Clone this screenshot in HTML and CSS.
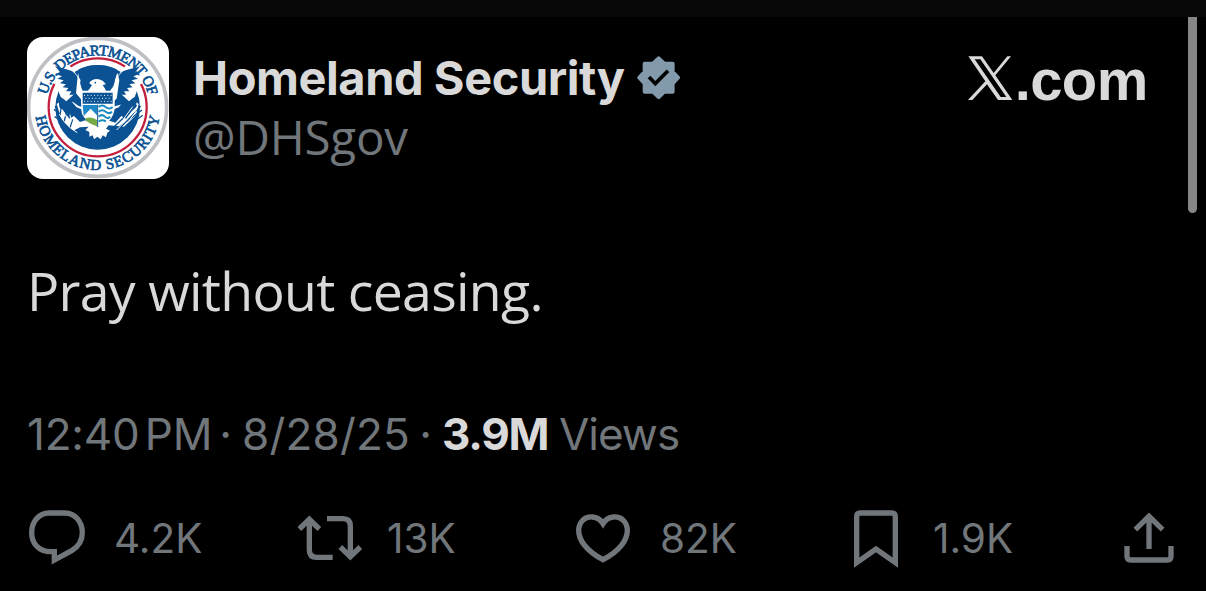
FILE: index.html
```
<!DOCTYPE html>
<html lang="en">
<head>
<meta charset="utf-8">
<title>Homeland Security on X</title>
<link rel="stylesheet" href="styles.css">
</head>
<body>
<div class="topbar"></div>
<main class="post">
  <header class="head">
    <svg class="avatar" viewBox="21 21 426 426">
      <defs>
        <path id="arcTop" d="M77 232a156 156 0 0 1 312 0"/>
        <path id="arcBottom" d="M45 232a188 188 0 0 0 376 0"/>
      </defs>
      <rect x="21" y="21" width="426" height="426" fill="#fff"/>
      <circle cx="233" cy="232" r="207" fill="none" stroke="#bfc0c4" stroke-width="11"/>
      <circle cx="233" cy="232" r="147" fill="none" stroke="#c41f3e" stroke-width="7"/>
      <circle cx="233" cy="232" r="127" fill="#0a5293"/>
      <path fill="#fff" d="M98 100L150 108L182 150L176 180L130 222L108 164L84 152ZM368 100L316 108L284 150L290 180L336 222L358 164L388 152Z"/>
      <path fill="#0a5293" d="M105 108C124 118 150 116 162 128C180 142 178 172 192 188L188 210L172 208L176 200L160 202L164 194L148 194L154 184L138 184L145 174L128 172L138 163L120 160L131 151L112 146L126 139L107 132L120 126Z"/>
      <path fill="#0a5293" d="M361 108C342 118 316 116 304 128C286 142 288 172 274 188L278 210L294 208L290 200L306 202L302 194L318 194L312 184L328 184L321 174L338 172L328 163L346 160L335 151L354 146L340 139L359 132L346 126Z"/>
      <path fill="#fff" d="M174 128C180 156 184 180 192 188L196 178L206 184L218 166L212 158C218 146 234 144 242 152L256 162L248 166L262 184L272 178C284 170 284 148 292 128L298 150L290 206L276 216L190 216L168 190Z"/>
      <path fill="#0a5293" d="M176 118Q233 92 290 118L282 158L270 184L258 184L252 168L262 160Q244 145 230 148Q212 148 208 161L216 168L206 184L194 182L184 158Z"/>
      <path fill="#fff" d="M208 160Q212 149 229 148Q249 148 258 164Q248 159 245 168L258 184H203L216 166Z"/>
      <circle cx="226" cy="158" r="2.5" fill="#0a5293"/>
      <path fill="#fff" d="M110 222L124 212L140 224L158 215L176 228L190 232L195 270L214 282L250 282L272 270L280 230L300 224L322 222L340 210L356 222L348 256L312 290L266 286L258 296L270 302L262 308L258 322L248 316L242 328L232 320L222 328L218 316L208 320L208 306L196 300L206 290L180 292L160 302L124 268Z"/>
      <path fill="#0a5293" d="M114 196L130 206L144 218L156 216L170 232L184 238L186 252L198 270L180 276L162 258L148 266L130 242L118 232ZM352 196L336 206L322 218L310 216L296 232L282 238L278 256L268 272L286 278L304 258L318 266L336 242L348 232Z"/>
      <path fill="none" stroke="#0a5293" stroke-width="4" d="M106 228Q124 288 182 318M102 238L119 252M124 228L120 256M104 260L128 276M140 246L132 276M120 290L146 294M158 268L149 296M362 228L278 318M366 240L276 307M368 256L286 318M350 226L272 300"/>
      <path fill="none" stroke="#fff" stroke-width="3" d="M126 238L138 260M150 254L153 276M310 268L338 230M326 274L350 242M172 276L184 286M118 252Q134 286 172 308M290 300L352 236"/>
      <path fill="#fff" d="M182 182H284V236Q278 276 234 296Q190 276 184 236Z"/>
      <path fill="#0a5293" d="M188 188H278V221H188Z"/>
      <path fill="none" stroke="#fff" stroke-width="3" stroke-dasharray="3 7" d="M192 196H276M196 205H274M192 214H276"/>
      <path fill="#1c88c8" d="M188 225H231V256L212 236L191 258Z"/>
      <path fill="#75a944" d="M194 266Q214 257 231 270V289Q204 280 194 266Z"/>
      <path fill="none" stroke="#168cc1" stroke-width="6" d="M236 231Q246 222 257 231T278 231M236 245Q246 236 257 245T276 245M236 260Q246 251 255 260T270 260M236 275Q244 267 258 274"/>
      <path fill="none" stroke="#0a5293" stroke-width="3" d="M233 224V291"/>
      <text class="seal-text"><textPath href="#arcTop" startOffset="37" textLength="418" lengthAdjust="spacing">U.S. DEPARTMENT OF</textPath></text>
      <text class="seal-text"><textPath href="#arcBottom" startOffset="28" textLength="534" lengthAdjust="spacing">HOMELAND SECURITY</textPath></text>
    </svg>
    <div class="who">
      <div class="name-row">
        <span class="name">Homeland Security</span>
        <svg class="badge" viewBox="622 49 130 130">
          <path fill="#829aab" stroke="#829aab" stroke-width="12" stroke-linejoin="round" d="M687 56L704 72H729V97L745 114L729 131V156H704L687 172L670 156H645V131L629 114L645 97V72H670Z"/>
          <path fill="none" stroke="#000" stroke-width="11" d="M658 112L677 132L715 93"/>
        </svg>
      </div>
      <div class="handle">@DHSgov</div>
    </div>
    <div class="brand">
      <svg class="brand-x" viewBox="56 167 134 134">
        <path fill="#d9d9d9" fill-rule="evenodd" d="M57 168H98L133 218L174 168H185L138 225L189 299H146L113 252L69 299H56L108 243ZM76 177L154 290H171L93 177Z"/>
      </svg>
      <span class="brand-com">.com</span>
    </div>
  </header>
  <p class="body-text">Pray without ceasing.</p>
  <div class="meta"><span class="time">12:40 PM</span><span class="dot">·</span><span class="date">8/28/25</span><span class="dot">·</span><b class="views">3.9M</b><span class="views-label">Views</span></div>
  <footer class="actions">
    <div class="action">
      <svg class="icon" viewBox="72 51 198 198"><path d="M147 69H195C225 69 247 96 247 128C247 156 233 171 215 182L163 210V185H152C116 185 95 160 95 128C95 96 116 69 147 69Z"/></svg>
      <span class="count">4.2K</span>
    </div>
    <div class="action">
      <svg class="icon" viewBox="51 51 198 198"><path d="M58 117L88 88L118 117M88 90V180Q88 202 110 202H158M141 86H189Q211 86 211 108V198M181 171L211 200L241 171"/></svg>
      <span class="count">13K</span>
    </div>
    <div class="action">
      <svg class="icon" viewBox="30 51 198 198"><path d="M129 101C113 75 82 77 68 91C51 108 52 137 72 164Q92 190 129 209Q166 190 186 164C206 137 207 108 190 91C176 77 145 75 129 101Z"/></svg>
      <span class="count">82K</span>
    </div>
    <div class="action">
      <svg class="icon" viewBox="9 51 198 198"><path d="M50 218V80Q50 69 61 69H155Q166 69 166 80V218L108 177Z"/></svg>
      <span class="count">1.9K</span>
    </div>
    <div class="action">
      <svg class="icon" viewBox="828 51 198 198"><path d="M927 177V80M886 119L927 79L968 119M861 168V199Q861 210 872 210H983Q993 210 993 199V168"/></svg>
    </div>
  </footer>
</main>
<div class="scrollbar"></div>
</body>
</html>
```
FILE: styles.css
```
body {
  margin: 0;
  height: 591px;
  overflow: hidden;
  background: #000;
  color: #d9d9d9;
  font-family: Inter, "Liberation Sans", sans-serif;
  white-space: nowrap;
}
.topbar { height: 17px; background: #080808; }
.post { padding: 20px 0 0 27px; }
.head { display: flex; height: 142px; }
.avatar { width: 142px; height: 142px; border-radius: 16px; flex: none; }
.seal-text {
  font-family: "Liberation Serif", serif;
  font-size: 45px;
  fill: #0a5293;
  stroke: #0a5293;
  stroke-width: 2;
}
.who { margin-left: 24px; padding-top: 11px; width: 775px; }
.name-row { display: flex; align-items: center; height: 60px; }
.name { width: 444px; font-size: 47px; font-weight: 700; letter-spacing: -0.45px; line-height: 60px; }
.badge { width: 43.3px; height: 43.3px; }
.handle { font-family: "Open Sans", sans-serif; font-size: 47.5px; line-height: 58px; letter-spacing: -0.2px; color: #71767b; }
.brand { display: flex; align-items: flex-start; padding-top: 19px; }
.brand-x { width: 44.7px; height: 44.7px; margin-right: 2px; }
.brand-com {
  font-family: "Liberation Sans", sans-serif;
  font-weight: 700;
  font-size: 58px;
  line-height: 47px;
  letter-spacing: -0.6px;
}
.body-text {
  margin: 74px 0 0;
  font-family: "Open Sans", sans-serif;
  font-size: 53.6px;
  line-height: 76px;
  letter-spacing: -0.7px;
}
.meta { display: flex; margin-top: 65px; font-size: 44px; line-height: 80px; height: 80px; color: #71767b; }
.time { width: 182px; word-spacing: -7px; letter-spacing: -0.2px; }
.dot { width: 33px; text-align: center; }
.date { width: 167px; letter-spacing: 0.2px; }
.views { width: 117px; color: #d9d9d9; font-weight: 700; letter-spacing: -1.2px; }
.views-label { letter-spacing: -1px; }
.actions { display: grid; grid-template-columns: repeat(4, 273px) 66px; margin: 33px 0 0 -3px; }
.action { display: flex; align-items: center; height: 66px; }
.icon { width: 66px; height: 66px; margin-right: 24px; flex: none; }
.icon path { fill: none; stroke: #71767b; stroke-width: 16; }
.count { font-size: 40.5px; line-height: 66px; padding-bottom: 2px; color: #71767b; }
.scrollbar {
  position: absolute;
  left: 1188px;
  top: 17px;
  width: 9px;
  height: 196px;
  border-radius: 0 0 5px 5px;
  background: #868686;
}
```
